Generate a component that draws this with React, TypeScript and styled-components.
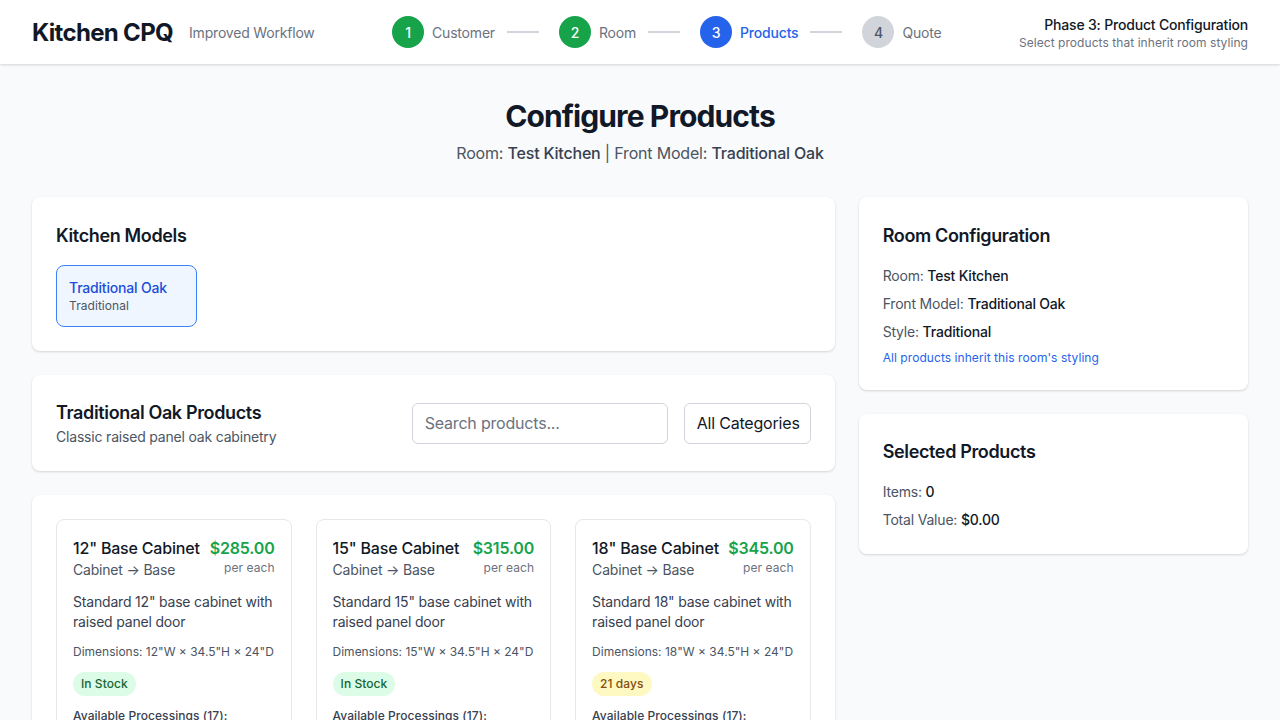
import React from 'react';
import styled, { createGlobalStyle } from 'styled-components';

const GlobalStyle = createGlobalStyle`
  body {
    margin: 0;
    background: #f9fafb;
    font-family: Inter, "Noto Sans", sans-serif;
    color: #111827;
    letter-spacing: -0.012em;
  }
  * { box-sizing: border-box; }
`;

const Header = styled.header`
  height: 64px;
  background: #fff;
  box-shadow: 0 1px 3px rgba(0, 0, 0, 0.1), 0 1px 2px rgba(0, 0, 0, 0.06);
  display: flex;
  align-items: center;
  justify-content: space-between;
  padding: 0 32px;
`;

const Brand = styled.div`
  display: flex;
  align-items: center;
  gap: 16px;
`;

const Logo = styled.h1`
  margin: 0;
  font-size: 24px;
  font-weight: 700;
  letter-spacing: -0.028em;
  color: #111827;
`;

const Tagline = styled.span`
  font-size: 14px;
  color: #6b7280;
`;

const Steps = styled.div`
  display: flex;
  align-items: center;
`;

const Step = styled.div`
  display: flex;
  align-items: center;
  gap: 8px;
`;

const Circle = styled.div<{ $state: 'done' | 'active' | 'todo' }>`
  width: 32px;
  height: 32px;
  border-radius: 50%;
  display: flex;
  align-items: center;
  justify-content: center;
  font-size: 14px;
  font-weight: 500;
  background: ${p => (p.$state === 'done' ? '#16a34a' : p.$state === 'active' ? '#2563eb' : '#d1d5db')};
  color: ${p => (p.$state === 'todo' ? '#4b5563' : '#fff')};
`;

const StepLabel = styled.span<{ $active?: boolean }>`
  font-size: 14px;
  color: ${p => (p.$active ? '#2563eb' : '#6b7280')};
  font-weight: ${p => (p.$active ? 500 : 400)};
`;

const Connector = styled.div`
  width: 32px;
  height: 2px;
  background: #d1d5db;
  margin: 0 20px 0 12px;
`;

const Phase = styled.div`
  text-align: right;
  padding-top: 1px;
`;

const PhaseTitle = styled.div`
  font-size: 14px;
  font-weight: 500;
  color: #111827;
  line-height: 20px;
`;

const PhaseSub = styled.div`
  font-size: 12px;
  color: #6b7280;
  line-height: 16px;
  letter-spacing: 0.005em;
`;

const Main = styled.main`
  max-width: 1280px;
  padding: 34px 32px 32px;
`;

const PageHead = styled.div`
  text-align: center;
  margin-bottom: 32px;
`;

const PageTitle = styled.h2`
  margin: 0;
  font-size: 30px;
  line-height: 36px;
  font-weight: 700;
  letter-spacing: -0.03em;
  color: #111827;
`;

const PageSub = styled.p`
  margin: 7px 0 0;
  font-size: 16px;
  line-height: 24px;
  color: #4b5563;
  b { font-weight: 500; color: #374151; }
`;

const Grid = styled.div`
  display: grid;
  grid-template-columns: repeat(3, minmax(0, 1fr));
  gap: 24px;
  align-items: start;
`;

const Column = styled.div<{ $span?: number }>`
  grid-column: span ${p => p.$span ?? 1};
  display: flex;
  flex-direction: column;
  gap: 24px;
`;

const Card = styled.section`
  background: #fff;
  border-radius: 8px;
  box-shadow: 0 1px 3px rgba(0, 0, 0, 0.1), 0 1px 2px rgba(0, 0, 0, 0.06);
  padding: 24px;
`;

const CardTitle = styled.h3<{ $mb?: number; $pt?: number }>`
  margin: 0 0 ${p => p.$mb ?? 15}px;
  padding-top: ${p => p.$pt ?? 1}px;
  font-size: 18px;
  line-height: 28px;
  font-weight: 600;
  letter-spacing: -0.02em;
  color: #111827;
`;

const ModelButton = styled.button`
  display: block;
  text-align: left;
  font-family: inherit;
  letter-spacing: inherit;
  background: #eff6ff;
  border: 1px solid #3b82f6;
  border-radius: 8px;
  padding: 12px;
  width: 141px;
  cursor: pointer;
`;

const ModelName = styled.div`
  font-size: 14px;
  line-height: 20px;
  font-weight: 500;
  color: #1d4ed8;
`;

const ModelStyle = styled.div`
  font-size: 12px;
  line-height: 16px;
  letter-spacing: 0.005em;
  color: #4b5563;
`;

const FilterRow = styled.div`
  display: flex;
  align-items: center;
  justify-content: space-between;
`;

const SubText = styled.p`
  margin: 0;
  font-size: 14px;
  line-height: 20px;
  color: #4b5563;
`;

const Filters = styled.div`
  display: flex;
  gap: 16px;
`;

const Search = styled.input`
  width: 256px;
  height: 41px;
  padding: 8px 12px;
  border: 1px solid #d1d5db;
  border-radius: 6px;
  font-family: inherit;
  letter-spacing: inherit;
  font-size: 16px;
  color: #111827;
  &::placeholder { color: #6b7280; }
`;

const Select = styled.div`
  width: 127px;
  height: 41px;
  padding: 0 12px;
  border: 1px solid #d1d5db;
  border-radius: 6px;
  font-size: 16px;
  display: flex;
  align-items: center;
  white-space: nowrap;
  color: #111827;
  background: #fff;
`;

const ProductGrid = styled.div`
  display: grid;
  grid-template-columns: repeat(3, minmax(0, 1fr));
  gap: 24px;
`;

const Product = styled.div`
  border: 1px solid #e5e7eb;
  border-radius: 8px;
  padding: 16px;
`;

const ProductTop = styled.div`
  display: flex;
  justify-content: space-between;
  align-items: flex-start;
  margin-bottom: 12px;
`;

const ProductName = styled.div`
  font-size: 16px;
  line-height: 24px;
  font-weight: 500;
  color: #111827;
`;

const ProductCat = styled.div`
  font-size: 14px;
  line-height: 20px;
  color: #4b5563;
`;

const Price = styled.div`
  text-align: right;
  font-size: 16px;
  line-height: 24px;
  font-weight: 600;
  color: #16a34a;
  white-space: nowrap;
  span {
    display: block;
    font-size: 12px;
    line-height: 16px;
    font-weight: 400;
    letter-spacing: 0.005em;
    color: #6b7280;
  }
`;

const Desc = styled.p`
  margin: 0 0 12px;
  font-size: 14px;
  line-height: 20px;
  color: #374151;
`;

const Dims = styled.div`
  font-size: 12px;
  line-height: 16px;
  letter-spacing: 0;
  white-space: nowrap;
  color: #4b5563;
  margin-bottom: 12px;
`;

const Badge = styled.span<{ $tone: 'green' | 'yellow' }>`
  display: inline-block;
  padding: 2px 8px;
  border-radius: 9999px;
  font-size: 12px;
  line-height: 20px;
  font-weight: 500;
  letter-spacing: 0.005em;
  background: ${p => (p.$tone === 'green' ? '#dcfce7' : '#fef9c3')};
  color: ${p => (p.$tone === 'green' ? '#166534' : '#854d0e')};
`;

const Processings = styled.div`
  margin-top: 12px;
  font-size: 12px;
  line-height: 16px;
  font-weight: 500;
  letter-spacing: 0.005em;
  color: #374151;
`;

const InfoRow = styled.div`
  font-size: 14px;
  line-height: 20px;
  color: #4b5563;
  margin-bottom: 8px;
  &:last-child { margin-bottom: 0; }
  b { font-weight: 500; color: #111827; }
`;

const Note = styled.div`
  font-size: 12px;
  line-height: 16px;
  letter-spacing: 0.005em;
  color: #2563eb;
`;

const products = [
  { size: '12', price: '$285.00', badge: 'In Stock', tone: 'green' as const },
  { size: '15', price: '$315.00', badge: 'In Stock', tone: 'green' as const },
  { size: '18', price: '$345.00', badge: '21 days', tone: 'yellow' as const },
];

const steps = [
  { n: 1, label: 'Customer', state: 'done' as const },
  { n: 2, label: 'Room', state: 'done' as const },
  { n: 3, label: 'Products', state: 'active' as const },
  { n: 4, label: 'Quote', state: 'todo' as const },
];

export default function App() {
  return (
    <>
      <GlobalStyle />
      <Header>
        <Brand>
          <Logo>Kitchen CPQ</Logo>
          <Tagline>Improved Workflow</Tagline>
        </Brand>
        <Steps>
          {steps.map((s, i) => (
            <React.Fragment key={s.n}>
              <Step>
                <Circle $state={s.state}>{s.n}</Circle>
                <StepLabel $active={s.state === 'active'}>{s.label}</StepLabel>
              </Step>
              {i < steps.length - 1 && <Connector />}
            </React.Fragment>
          ))}
        </Steps>
        <Phase>
          <PhaseTitle>Phase 3: Product Configuration</PhaseTitle>
          <PhaseSub>Select products that inherit room styling</PhaseSub>
        </Phase>
      </Header>

      <Main>
        <PageHead>
          <PageTitle>Configure Products</PageTitle>
          <PageSub>
            Room: <b>Test Kitchen</b> | Front Model: <b>Traditional Oak</b>
          </PageSub>
        </PageHead>

        <Grid>
          <Column $span={2}>
            <Card>
              <CardTitle>Kitchen Models</CardTitle>
              <ModelButton>
                <ModelName>Traditional Oak</ModelName>
                <ModelStyle>Traditional</ModelStyle>
              </ModelButton>
            </Card>

            <Card>
              <FilterRow>
                <div>
                  <CardTitle $mb={0} $pt={0}>Traditional Oak Products</CardTitle>
                  <SubText>Classic raised panel oak cabinetry</SubText>
                </div>
                <Filters>
                  <Search placeholder="Search products..." />
                  <Select>All Categories</Select>
                </Filters>
              </FilterRow>
            </Card>

            <Card>
              <ProductGrid>
                {products.map(p => (
                  <Product key={p.size}>
                    <ProductTop>
                      <div>
                        <ProductName>{p.size}" Base Cabinet</ProductName>
                        <ProductCat>Cabinet → Base</ProductCat>
                      </div>
                      <Price>
                        {p.price}
                        <span>per each</span>
                      </Price>
                    </ProductTop>
                    <Desc>Standard {p.size}" base cabinet with raised panel door</Desc>
                    <Dims>Dimensions: {p.size}"W × 34.5"H × 24"D</Dims>
                    <Badge $tone={p.tone}>{p.badge}</Badge>
                    <Processings>Available Processings (17):</Processings>
                  </Product>
                ))}
              </ProductGrid>
            </Card>
          </Column>

          <Column>
            <Card>
              <CardTitle $mb={16}>Room Configuration</CardTitle>
              <InfoRow>Room: <b>Test Kitchen</b></InfoRow>
              <InfoRow>Front Model: <b>Traditional Oak</b></InfoRow>
              <InfoRow>Style: <b>Traditional</b></InfoRow>
              <Note>All products inherit this room's styling</Note>
            </Card>
            <Card>
              <CardTitle $mb={16} $pt={0}>Selected Products</CardTitle>
              <InfoRow>Items: <b>0</b></InfoRow>
              <InfoRow>Total Value: <b>$0.00</b></InfoRow>
            </Card>
          </Column>
        </Grid>
      </Main>
    </>
  );
}
